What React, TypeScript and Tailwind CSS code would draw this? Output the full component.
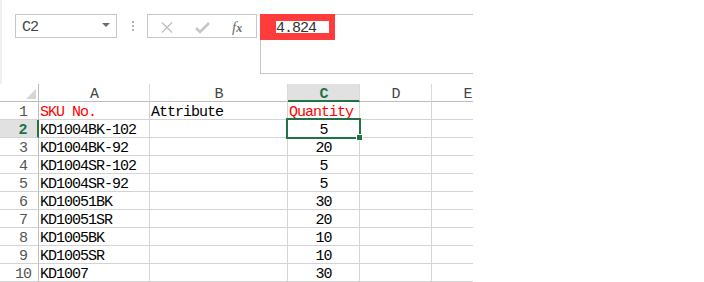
import React from "react";

const mono = { fontFamily: "'Liberation Mono', 'DejaVu Sans Mono', monospace" };

const rows: { n: number; a: string; b: string; c: string; red?: boolean }[] = [
  { n: 1, a: "SKU No.", b: "Attribute", c: "Quantity", red: true },
  { n: 2, a: "KD1004BK-102", b: "", c: "5" },
  { n: 3, a: "KD1004BK-92", b: "", c: "20" },
  { n: 4, a: "KD1004SR-102", b: "", c: "5" },
  { n: 5, a: "KD1004SR-92", b: "", c: "5" },
  { n: 6, a: "KD10051BK", b: "", c: "30" },
  { n: 7, a: "KD10051SR", b: "", c: "20" },
  { n: 8, a: "KD1005BK", b: "", c: "10" },
  { n: 9, a: "KD1005SR", b: "", c: "10" },
  { n: 10, a: "KD1007", b: "", c: "30" },
];

export default function App() {
  return (
    <div className="w-[704px] h-[282px] bg-white overflow-hidden" style={mono}>
      <div className="relative w-[473px] h-[282px] overflow-hidden text-[15px] tracking-[-1px]">
        {/* Top formula bar area */}
        <div className="flex items-start h-[84px] pt-[14px] pl-[13px] border-l-2 border-[#f0f0f0]">
          <div className="relative shrink-0 w-[102px] h-[24px] border border-[#c6c6c6] pl-[6px] pt-[3px] leading-[20px] text-[#444]">
            C2
            <svg className="absolute left-[86px] top-[8px]" width="8" height="5" viewBox="0 0 8 5">
              <polygon points="0,0 8,0 4,4" fill="#6b6b6b" />
            </svg>
          </div>
          <div className="shrink-0 w-[30px] h-[24px] flex flex-col items-center justify-start pt-[7px] gap-[2px] pl-[1px]">
            <div className="w-[2px] h-[2px] bg-[#b4b4b4]" />
            <div className="w-[2px] h-[2px] bg-[#b4b4b4]" />
            <div className="w-[2px] h-[2px] bg-[#b4b4b4]" />
          </div>
          <div className="relative shrink-0 w-[110px] h-[24px] border border-[#c6c6c6]">
            <svg className="absolute left-[13px] top-[7px]" width="12" height="11" viewBox="0 0 12 11">
              <path d="M1 0.5 L11 10.5 M11 0.5 L1 10.5" stroke="#c3c3c3" strokeWidth="1.5" fill="none" />
            </svg>
            <svg className="absolute left-[47px] top-[7px]" width="15" height="12" viewBox="0 0 15 12">
              <path d="M1 6 L5 10 L14 1" stroke="#c6c6c6" strokeWidth="2.6" fill="none" />
            </svg>
            <span
              className="absolute left-[84px] top-[3px] italic text-[15px] leading-[18px] text-[#6f6f6f] tracking-normal"
              style={{ fontFamily: "'Liberation Serif', serif" }}
            >
              f<span className="text-[12px] font-bold">x</span>
            </span>
          </div>
          <div className="relative shrink-0 ml-[3px] w-[260px] h-[60px] border border-[#c6c6c6] pl-[15px] pt-[4px] leading-[20px] text-[#333]">
            4.824
            <div className="absolute -left-[1px] -top-[1px] w-[75px] h-[26px] border-l-[16px] border-t-[7px] border-r-[6px] border-b-[7px] border-[#ff3b3b]" />
          </div>
        </div>

        {/* Grid */}
        <div className="flex flex-col">
          <div className="flex h-[18px]">
            <div className="relative shrink-0 w-[39px] h-[18px] border-r border-b border-[#bdbdbd]">
              <svg className="absolute right-[2px] bottom-[2px]" width="10" height="10" viewBox="0 0 10 10">
                <polygon points="10,0 10,10 0,10" fill="#d6d6d6" />
              </svg>
            </div>
            {[
              { l: "A", w: "w-[111px]" },
              { l: "B", w: "w-[138px]" },
              { l: "C", w: "w-[72px]" },
              { l: "D", w: "w-[72px]" },
              { l: "E", w: "w-[72px]" },
            ].map((h) =>
              h.l === "C" ? (
                <div
                  key={h.l}
                  className="w-[72px] shrink-0 h-[18px] bg-[#e1e1e1] border-r border-r-[#dadada] border-b-2 border-b-[#217346] text-center leading-[22px] font-bold text-[#217346]"
                >
                  C
                </div>
              ) : (
                <div
                  key={h.l}
                  className={`${h.w} shrink-0 h-[18px] border-r border-r-[#dadada] border-b border-b-[#bdbdbd] text-center leading-[22px] text-[#444]`}
                >
                  {h.l}
                </div>
              )
            )}
          </div>
          {rows.map((r) => (
            <div key={r.n} className="flex h-[18px]">
              {r.n === 2 ? (
                <div className="w-[39px] shrink-0 h-[18px] bg-[#e1e1e1] border-r-2 border-r-[#217346] border-b border-b-[#d4d4d4] pl-[8px] text-center leading-[22px] font-bold text-[#217346]">
                  {r.n}
                </div>
              ) : (
                <div className="w-[39px] shrink-0 h-[18px] border-r border-r-[#bdbdbd] border-b border-b-[#d4d4d4] pl-[8px] text-center leading-[22px] text-[#555]">
                  {r.n}
                </div>
              )}
              <div
                className={`w-[111px] shrink-0 h-[18px] border-r border-b border-[#d4d4d4] pl-[1px] leading-[22px] whitespace-nowrap ${r.red ? "text-[#ff0000]" : "text-black"}`}
              >
                {r.a}
              </div>
              <div className="w-[138px] shrink-0 h-[18px] border-r border-b border-[#d4d4d4] pl-[1px] leading-[22px] whitespace-nowrap text-black">
                {r.b}
              </div>
              <div
                className={`w-[72px] shrink-0 h-[18px] border-r border-b border-[#d4d4d4] leading-[22px] whitespace-nowrap ${r.red ? "text-[#ff0000] pl-[1px]" : "text-black text-center"}`}
              >
                {r.c}
              </div>
              <div className="w-[72px] shrink-0 h-[18px] border-r border-b border-[#d4d4d4]" />
              <div className="w-[72px] shrink-0 h-[18px] border-r border-b border-[#d4d4d4]" />
            </div>
          ))}
        </div>

        {/* Selection overlay */}
        <div className="absolute left-[286px] top-[118px] w-[75px] h-[21px] border-2 border-[#217346]" />
        <div className="absolute left-[356px] top-[134px] w-[7px] h-[7px] bg-[#217346] border border-white" />
      </div>
    </div>
  );
}
